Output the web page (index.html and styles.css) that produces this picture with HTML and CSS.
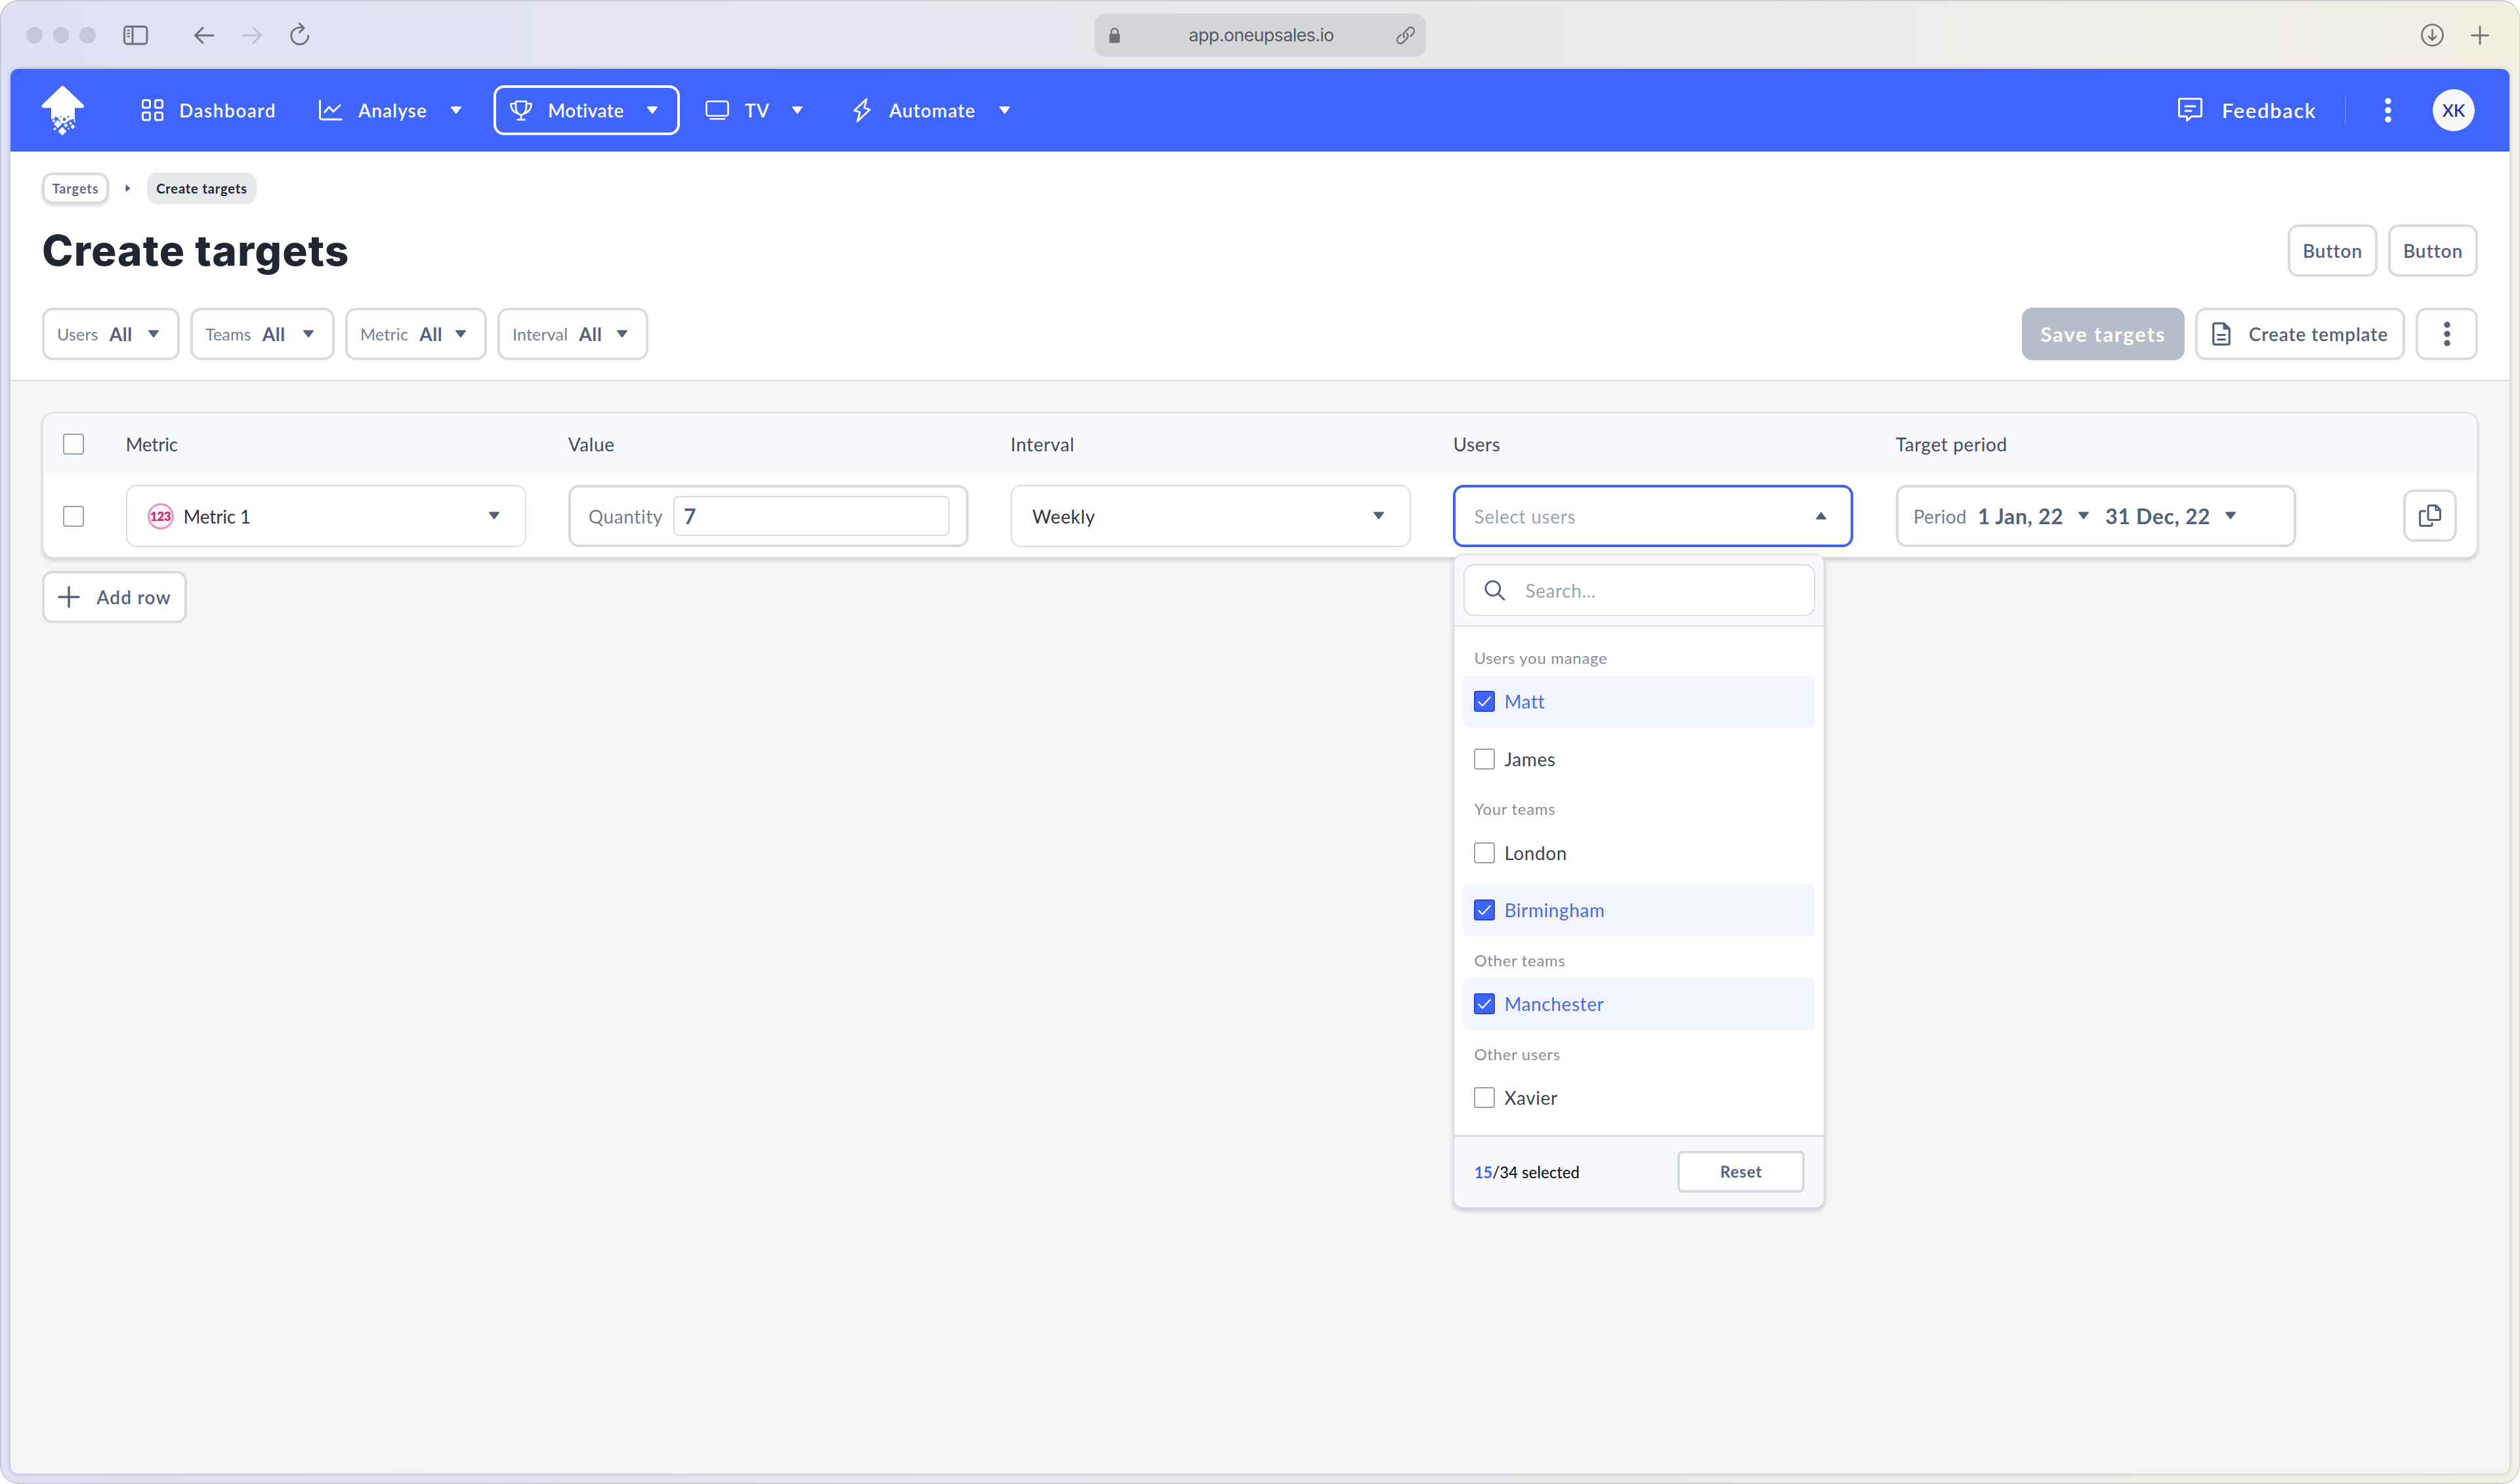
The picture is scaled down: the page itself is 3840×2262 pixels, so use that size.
FILE: index.html
```html
<!DOCTYPE html>
<html lang="en">
<head>
<meta charset="utf-8">
<title>Create targets</title>
<link rel="stylesheet" href="styles.css">
</head>
<body>
<svg class="defs" width="0" height="0">
  <symbol id="caret" viewBox="0 0 18 12"><path d="M2 1.2h14L9 10.4z" fill="currentColor" stroke="currentColor" stroke-width="2" stroke-linejoin="round"/></symbol>
  <symbol id="tick" viewBox="0 0 32 32"><path d="M7.500 17l5.500 5.500L24.500 10" fill="none" stroke="#fff" stroke-width="2.200" stroke-linecap="round" stroke-linejoin="round"/></symbol>
  <symbol id="dots" viewBox="0 0 10 38"><g fill="currentColor"><circle cx="5" cy="5" r="4.700"/><circle cx="5" cy="19" r="4.700"/><circle cx="5" cy="33" r="4.700"/></g></symbol>
</svg>
<div class="window">
  <header class="chrome">
    <div class="chrome-left">
      <div class="lights"><i></i><i></i><i></i></div>
      <svg class="sidebar-icon" width="38" height="30" viewBox="0 0 38 30" fill="none" stroke="#6d6e7c" stroke-width="2.800"><rect x="1.500" y="1.500" width="34.500" height="26.500" rx="4"/><path d="M14 2v26"/><path d="M5.500 7.500h4.500M5.500 12h4.500M5.500 16.500h4.500" stroke-width="2"/></svg>
      <svg class="back-icon" width="32" height="28" viewBox="0 0 32 28" fill="none" stroke="#6d6e7c" stroke-width="3" stroke-linecap="round" stroke-linejoin="round"><path d="M30 14H2.500M14 2.500L2.500 14 14 25.500"/></svg>
      <svg class="forward-icon" width="32" height="28" viewBox="0 0 32 28" fill="none" stroke="#bfc0d0" stroke-width="3" stroke-linecap="round" stroke-linejoin="round"><path d="M2 14h27.500M18 2.500L29.500 14 18 25.500"/></svg>
      <svg class="reload-icon" width="30" height="36" viewBox="0 0 30 36" fill="none" stroke="#6d6e7c" stroke-width="2.800" stroke-linecap="round" stroke-linejoin="round"><path d="M20.500 8.500C10.500 5.500 1.800 12 1.800 20.500A13 13 0 0 0 27.800 20.500"/><path d="M14.500 1.800l6.700 7-6.700 6.700"/></svg>
    </div>
    <div class="address">
      <svg width="17" height="24" viewBox="0 0 17 24"><rect x="0.500" y="9.500" width="16" height="14" rx="2" fill="#707179"/><path d="M3.500 10V6.500a5 5 0 0 1 10 0V10" fill="none" stroke="#707179" stroke-width="2.400"/></svg>
      <span>app.oneupsales.io</span>
      <svg width="28" height="28" viewBox="0 0 28 28" fill="none" stroke="#707179" stroke-width="2.400" stroke-linecap="round"><path d="M12.400 17.200a5.600 5.600 0 0 1-.4-7.900l6-6a5.300 5.300 0 0 1 7.600 7.500l-4.200 4.300"/><path d="M15.600 10.800a5.600 5.600 0 0 1 .4 7.900l-6 6a5.300 5.300 0 0 1-7.600-7.500l4.200-4.300"/></svg>
    </div>
    <div class="chrome-right">
      <svg width="35" height="35" viewBox="0 0 35 35" fill="none" stroke="#73736f" stroke-width="2.600" stroke-linecap="round" stroke-linejoin="round"><circle cx="17.500" cy="17.500" r="16"/><path d="M17.500 9.500v15.500M11.800 19.500l5.700 5.700 5.700-5.700"/></svg>
      <svg width="28" height="30" viewBox="0 0 28 30" stroke="#73736f" stroke-width="2.800" stroke-linecap="round"><path d="M1.500 15h25M14 2v26"/></svg>
    </div>
  </header>

  <div class="app">
    <nav class="navbar">
      <svg class="logo" width="66" height="76" viewBox="0 0 66 76"><path d="M32.500 1c1 0 2 .5 3 1.500L64 29.500c2 2.500 1 5-2 5H51V58H15V34.500H3.500c-3 0-4-2.500-2-5L29.500 2.500c1-1 2-1.500 3-1.500z" fill="#fff"/><g fill="#4065ff"><path d="M15 52l10-3 5 8-8 5h-7zM36 58l9-6 6 4v4H34z"/><circle cx="22" cy="49" r="1.600"/><circle cx="35" cy="52" r="2.400"/><circle cx="41" cy="48" r="1.400"/><circle cx="30" cy="48" r="1"/><circle cx="48" cy="53" r="1.800"/></g><g fill="#fff"><path d="M25 52.500l6 6.500-6 6.500-6-6.500zM32 63.500l6.500 6.500-6.500 6.500-6.500-6.500zM48 59.500l3.500 3.500-3.500 4-3.500-4z"/><circle cx="19" cy="54" r="2"/><circle cx="37.500" cy="61" r="2.600"/><circle cx="44.500" cy="58" r="2"/><circle cx="20.500" cy="66.500" r="2"/><circle cx="41.500" cy="66" r="1.400"/><circle cx="51" cy="55" r="1.200"/></g></svg>
      <div class="nav-items">
        <a class="nav-item"><svg width="33" height="34" viewBox="0 0 33 34" fill="none" stroke="#fff" stroke-width="3"><rect x="1.500" y="1.700" width="11" height="11.500" rx="2.500"/><rect x="20.500" y="1.700" width="11" height="11.500" rx="2.500"/><rect x="1.500" y="20.500" width="11" height="11.500" rx="2.500"/><rect x="20.500" y="20.500" width="11" height="11.500" rx="2.500"/></svg><span class="wide">Dashboard</span></a>
        <a class="nav-item analyse"><svg width="36" height="32" viewBox="0 0 36 32" fill="none" stroke="#fff" stroke-width="2.800" stroke-linecap="round" stroke-linejoin="round"><path d="M1.600 1.500v25.500q0 3 3 3H34.500M8.500 19l7-8 6.500 7L32 8.500"/></svg><span>Analyse</span><svg class="caret"><use href="#caret"/></svg></a>
        <a class="nav-item motivate"><svg width="34" height="31" viewBox="0 0 34 31" fill="none" stroke="#fff" stroke-width="2.600" stroke-linecap="round" stroke-linejoin="round"><path d="M9 1.500h16v8c0 7-3 11.500-8 13-5-1.500-8-6-8-13zM9 5H1.500c0 8 3.500 13.500 12 15.500M25 5h7.500c0 8-3.500 13.500-12 15.500M17 22.500v6.500M11.500 29.500h11"/></svg><span class="tight">Motivate</span><svg class="caret"><use href="#caret"/></svg></a>
        <a class="nav-item tv"><svg width="36" height="30" viewBox="0 0 36 30" fill="none" stroke="#fff" stroke-width="2.600" stroke-linecap="round"><rect x="1.500" y="1.500" width="33" height="22" rx="3"/><path d="M7.500 28.300h21.500"/></svg><span>TV</span><svg class="caret"><use href="#caret"/></svg></a>
        <a class="nav-item automate"><svg width="32" height="38" viewBox="0 0 32 38" fill="none" stroke="#fff" stroke-width="2.800" stroke-linejoin="round"><path d="M21.500 2L3 19.500l8.500 2.500L7.500 36 26.500 18 18 15.500z"/></svg><span>Automate</span><svg class="caret"><use href="#caret"/></svg></a>
      </div>
      <div class="nav-right">
        <svg width="37" height="38" viewBox="0 0 37 38" fill="none" stroke="#fff" stroke-width="3" stroke-linecap="round" stroke-linejoin="round"><path d="M3.500 1.600h30q2 0 2 2v23q0 2-2 2H20.500L13.500 35v-6.400h-10q-2 0-2-2v-23q0-2 2-2zM11 13h15M11 20h9"/></svg>
        <span class="feedback">Feedback</span>
        <i class="divider"></i>
        <svg class="menu-dots"><use href="#dots"/></svg>
        <span class="avatar">XK</span>
      </div>
    </nav>

    <section class="page-head">
      <div class="crumbs">
        <a class="crumb">Targets</a>
        <svg width="8" height="12" viewBox="0 0 8 12"><path d="M1 1l6 5-6 5z" fill="#54617d" stroke="#54617d" stroke-linejoin="round"/></svg>
        <span class="crumb-current">Create targets</span>
      </div>
      <div class="bar">
        <h1>Create targets</h1>
        <div class="actions"><button class="btn plain">Button</button><button class="btn plain">Button</button></div>
      </div>
      <div class="bar filters-bar">
        <div class="filters">
          <div class="filter f-users"><label>Users</label><b>All</b><svg class="caret"><use href="#caret"/></svg></div>
          <div class="filter f-teams"><label>Teams</label><b>All</b><svg class="caret"><use href="#caret"/></svg></div>
          <div class="filter f-metric"><label>Metric</label><b>All</b><svg class="caret"><use href="#caret"/></svg></div>
          <div class="filter f-interval"><label>Interval</label><b>All</b><svg class="caret"><use href="#caret"/></svg></div>
        </div>
        <div class="actions">
          <button class="btn save">Save targets</button>
          <button class="btn template"><svg width="28" height="36" viewBox="0 0 28 36" fill="none" stroke="#54617d" stroke-width="3.200" stroke-linecap="round" stroke-linejoin="round"><path d="M4.500 1.800h13.500L26.200 10v21.500q0 2.700-2.700 2.700h-19q-2.700 0-2.700-2.700v-27q0-2.700 2.700-2.700z"/><path d="M17.500 2v8.500H26z" fill="#54617d" stroke-width="2"/><path d="M8.500 19.500h11M8.500 26.500h11" stroke-width="2.800"/></svg><span>Create template</span></button>
          <button class="btn more"><svg class="menu-dots"><use href="#dots"/></svg></button>
        </div>
      </div>
    </section>

    <main class="content">
      <div class="table">
        <div class="row head"><i class="check"></i><span class="snug">Metric</span><span>Value</span><span>Interval</span><span>Users</span><span>Target period</span></div>
        <div class="row body">
          <i class="check"></i>
          <div class="cell"><div class="field metric"><span class="badge">123</span><span class="snug">Metric 1</span><svg class="caret"><use href="#caret"/></svg></div></div>
          <div class="cell"><div class="field thick quantity"><label>Quantity</label><span class="value">7</span></div></div>
          <div class="cell"><div class="field"><span>Weekly</span><svg class="caret"><use href="#caret"/></svg></div></div>
          <div class="cell users">
            <div class="field thick open"><span>Select users</span><svg class="caret up"><use href="#caret"/></svg></div>
            <div class="dropdown">
              <div class="search-head"><div class="search"><svg width="32" height="32" viewBox="0 0 32 32" fill="none" stroke="#54617d" stroke-width="2.800" stroke-linecap="round"><circle cx="12.800" cy="12.800" r="11"/><path d="M21 21l9 9"/></svg><span>Search...</span></div></div>
              <div class="options">
                <h3>Users you manage</h3>
                <div class="option on"><i class="check"><svg><use href="#tick"/></svg></i>Matt</div>
                <div class="option"><i class="check"></i>James</div>
                <h3>Your teams</h3>
                <div class="option"><i class="check"></i>London</div>
                <div class="option on"><i class="check"><svg><use href="#tick"/></svg></i>Birmingham</div>
                <h3>Other teams</h3>
                <div class="option on"><i class="check"><svg><use href="#tick"/></svg></i>Manchester</div>
                <h3>Other users</h3>
                <div class="option"><i class="check"></i>Xavier</div>
              </div>
              <div class="summary"><span><b>15</b>/34 selected</span><button class="reset">Reset</button></div>
            </div>
          </div>
          <div class="cell"><div class="field thick period"><label>Period</label><b>1 Jan, 22</b><svg class="caret"><use href="#caret"/></svg><b class="until">31 Dec, 22</b><svg class="caret"><use href="#caret"/></svg></div></div>
          <button class="copy"><svg width="34" height="34" viewBox="0 0 34 34" fill="none" stroke="#54617d" stroke-width="3" stroke-linecap="round" stroke-linejoin="round"><path d="M16 1.600h10L32.400 8v13.500q0 2-2 2H16q-2 0-2-2v-18q0-2 2-2z"/><path d="M25.500 2v6.500H32" stroke-width="2.400"/><path d="M9.500 10H3.600q-2 0-2 2v18.400q0 2 2 2h14.400q2 0 2-2V28.500"/></svg></button>
        </div>
      </div>
      <button class="btn add"><svg width="34" height="34" viewBox="0 0 34 34" stroke="#54617d" stroke-width="3.400" stroke-linecap="round"><path d="M2 17h30M17 2v30"/></svg><span>Add row</span></button>
    </main>
  </div>
</div>
</body>
</html>
```
FILE: styles.css
```css
* { box-sizing: border-box; }
html, body { margin: 0; background: #fff; }
body { width: 3840px; height: 2262px; overflow: hidden; font-family: Lato, "Noto Sans", sans-serif; font-size: 28px; letter-spacing: .6px; color: #2f3542; }
button { font: inherit; letter-spacing: inherit; margin: 0; padding: 0; cursor: pointer; }
svg { display: block; flex: none; }
h1, h3 { margin: 0; font-weight: 400; }
.defs { position: absolute; }
.caret { width: 18px; height: 12px; color: #54617d; margin-left: auto; margin-top: -1px; }
.caret.up { transform: scaleY(-1); }
.menu-dots { width: 10px; height: 38px; }

/* browser window */
.window { width: 3840px; height: 2262px; padding: 0 14px 14px; border: 2px solid #cfcfdb; border-color: #cdcdd4 #deddd0 #cfcfd4 #c6c7dc; border-radius: 28px; background: linear-gradient(90deg, #dfe0f4 0, #e3e4f1 20%, #e8e8ed 50%, #ededea 78%, #f2f0e2 100%); display: flex; flex-direction: column; }
.chrome { flex: none; height: 103px; display: grid; grid-template-columns: 1fr 505px 1fr; align-items: center; }
.chrome-left { display: flex; align-items: center; padding-left: 24px; }
.lights { display: flex; gap: 16px; }
.lights i { width: 24.500px; height: 24.500px; border-radius: 50%; background: #c5c6da; }
.sidebar-icon { margin-left: 42px; }
.back-icon { margin-left: 69px; }
.forward-icon { margin-left: 41px; }
.reload-icon { margin-left: 42px; margin-top: -3px; }
.address { height: 65px; border-radius: 16px; background: #d5d6da; display: flex; align-items: center; justify-content: space-between; padding: 0 17px 0 22px; font-family: Inter, sans-serif; font-size: 27px; letter-spacing: -.7px; color: #58595f; }
.address span { margin-left: 10px; }
.chrome-right { display: flex; align-items: center; justify-content: flex-end; gap: 41px; padding-right: 31px; }

.app { flex: 1; border-radius: 12px; overflow: hidden; background: #f5f5f5; box-shadow: 0 0 6px rgba(60, 60, 100, .28); }

/* navigation */
.navbar { height: 126px; background: #4065ff; color: #fff; display: flex; align-items: center; padding: 0 53px 0 47px; font-weight: 600; letter-spacing: 1.100px; }
.navbar .caret { color: #fff; }
.nav-items { margin-left: 87px; display: grid; grid-template-columns: 270px 266px 323px 224px 260px; align-items: center; }
.nav-item { display: flex; align-items: center; gap: 24px; height: 76px; }
.analyse { width: 218px; }
.motivate { width: 284px; border: 4px solid #fff; border-radius: 16px; padding: 0 29px 0 21px; }
.tv { width: 149px; }
.automate { width: 241px; }
.wide { letter-spacing: 1.500px; }
.tight { letter-spacing: .5px; }
.nav-right { margin-left: auto; display: flex; align-items: center; }
.feedback { margin-left: 30px; font-size: 31px; letter-spacing: 1.700px; }
.divider { width: 2px; height: 44px; background: #5f7eff; margin-left: 43px; }
.nav-right .menu-dots { margin-left: 59px; }
.avatar { margin-left: 63px; width: 64px; height: 64px; border-radius: 50%; background: #f6f8fc; color: #26329a; font-size: 26px; letter-spacing: 0; display: flex; align-items: center; justify-content: center; }

/* page header */
.page-head { height: 350px; padding: 32px 48px 0; background: #fff; border-bottom: 2px solid #dcdee1; }
.crumbs { display: flex; align-items: center; height: 48px; font-size: 20px; font-weight: 700; letter-spacing: .9px; }
.crumb { height: 48px; width: 102px; border: 4px solid #d7dbe1; border-radius: 16px; color: #5f6b85; display: flex; align-items: center; justify-content: center; box-shadow: 0 3px 4px rgba(80, 95, 120, .22); }
.crumbs svg { margin: 0 25px; }
.crumb-current { height: 48px; width: 167px; border-radius: 16px; background: #e8e9ed; color: #232833; display: flex; align-items: center; justify-content: center; }
.bar { display: flex; align-items: center; justify-content: space-between; margin-top: 31px; height: 80px; }
.filters-bar { margin-top: 47px; }
h1 { font: 800 64px/80px Inter, sans-serif; letter-spacing: 1.100px; color: #202733; }
.actions, .filters { display: flex; gap: 16px; }
.btn { height: 80px; border: 4px solid #d8dce2; border-radius: 16px; background: #fff; color: #54617d; font-weight: 600; display: flex; align-items: center; justify-content: center; letter-spacing: .9px; }
.plain { width: 137px; }
.save { width: 248px; background: #b6bdca; border-color: #b6bdca; color: #fff; font-size: 31px; font-weight: 700; letter-spacing: 1.900px; }
.template { width: 320px; gap: 28px; }
.more { width: 95px; }
.filter { height: 80px; border: 4px solid #d8dce2; border-radius: 16px; background: #fff; display: flex; align-items: center; gap: 17px; padding: 0 27px 0 19px; letter-spacing: .2px; }
.filter label { font-size: 25px; color: #737d92; }
.filter b { color: #54617d; font-weight: 700; letter-spacing: .6px; }
.filter .caret { margin-left: auto; }
.f-users { width: 210px; }
.f-teams { width: 220px; }
.f-metric { width: 216px; }
.f-interval { width: 230px; }

/* targets table */
.content { padding: 47px 48px; }
.table { height: 223px; border: 2px solid #d9dce1; border-radius: 18px; background: #fff; box-shadow: 0 4px 5px rgba(90, 105, 135, .24); }
.row { display: grid; grid-template-columns: 95.500px repeat(4, 674.300px) 773.500px 82px; align-items: center; padding-left: 30px; }
.head { height: 94px; background: #f8f9fc; border-radius: 16px 16px 0 0; color: #434b5a; }
.body { padding-top: 15px; align-items: start; }
.body > .check { margin-top: 32px; }
.check { display: flex; width: 32px; height: 32px; border: 2px solid #98a1b2; border-radius: 4px; background: #fff; }
.snug { letter-spacing: -.2px; }
.field { width: 610px; height: 95px; border: 2px solid #dadde2; border-radius: 16px; background: #fff; display: flex; align-items: center; padding: 0 38px 0 31px; }
.thick { border: 4px solid #d6dae1; padding: 0 36px 0 28px; }
.badge { width: 40px; height: 40px; margin-right: 15px; border: 3px solid #ee94bd; border-radius: 50%; background: #fcf1f6; color: #cb2a74; font-size: 19px; font-weight: 800; letter-spacing: -.6px; display: flex; align-items: center; justify-content: center; }
.field label { color: #737d92; }
.quantity { padding: 0 25px 0 27px; gap: 16px; }
.value { flex: 1; height: 61px; border: 2px solid #d9dce1; border-radius: 8px; padding-left: 14px; display: flex; align-items: center; font-size: 32px; font-weight: 700; color: #54617d; }
.users { position: relative; width: 610px; }
.open { border-color: #4262ee; color: #9aa3b1; }
.open span { letter-spacing: .7px; }
.period { padding-left: 23px; }
.period label { width: 98px; letter-spacing: .3px; }
.period b { font-size: 32px; font-weight: 700; color: #54617d; letter-spacing: .6px; }
.period .caret { margin-left: 22px; }
.period .until { margin-left: 24px; }
.copy { width: 82px; height: 80px; margin-top: 7px; border: 4px solid #d8dce2; border-radius: 16px; background: #fff; display: flex; align-items: center; justify-content: center; }
.add { width: 221px; margin-top: 19px; gap: 25px; letter-spacing: 1.200px; }

/* users dropdown */
.dropdown { position: absolute; top: 105px; left: 0; width: 567px; height: 998px; border: 2px solid #d9dce1; border-radius: 16px; background: #fff; box-shadow: 0 4px 6px rgba(90, 105, 135, .3); display: flex; flex-direction: column; overflow: hidden; color: #3c4351; }
.search-head { height: 109px; padding: 14px; background: #f8f9fc; border-bottom: 2px solid #d9dce1; }
.search { height: 79px; width: 536px; border: 2px solid #d9dce1; border-radius: 16px; background: #fff; display: flex; align-items: center; gap: 30px; padding-left: 30px; color: #9aa3b1; }
.options { flex: 1; padding: 11px 14px 0; }
h3 { height: 55px; padding-top: 9.500px; padding-left: 16px; font-size: 24px; line-height: 54px; height: 63.500px; letter-spacing: .7px; color: #858d9c; }
.option { width: 536px; height: 79.500px; border-radius: 8px; display: flex; align-items: center; gap: 14px; padding-left: 16px; }
.option + .option { margin-top: 8px; }
.option.on { background: #f2f5fe; color: #4a69ea; }
.on .check { background: #4065ff; border-color: #2b49c6; }
.on .check svg { width: 32px; height: 32px; margin: -2px; }
.summary { height: 110px; border-top: 3px solid #d9dce1; background: #f8f9fc; display: flex; align-items: center; justify-content: space-between; padding: 0 29px 0 30px; font-size: 24px; font-weight: 500; letter-spacing: 0; color: #14171c; }
.summary b { color: #4262ee; }
.reset { width: 194px; height: 64px; border: 4px solid #d6dae1; border-radius: 8px; background: #fff; color: #54617d; font-weight: 700; letter-spacing: .9px; margin-top: -2px; }
```
